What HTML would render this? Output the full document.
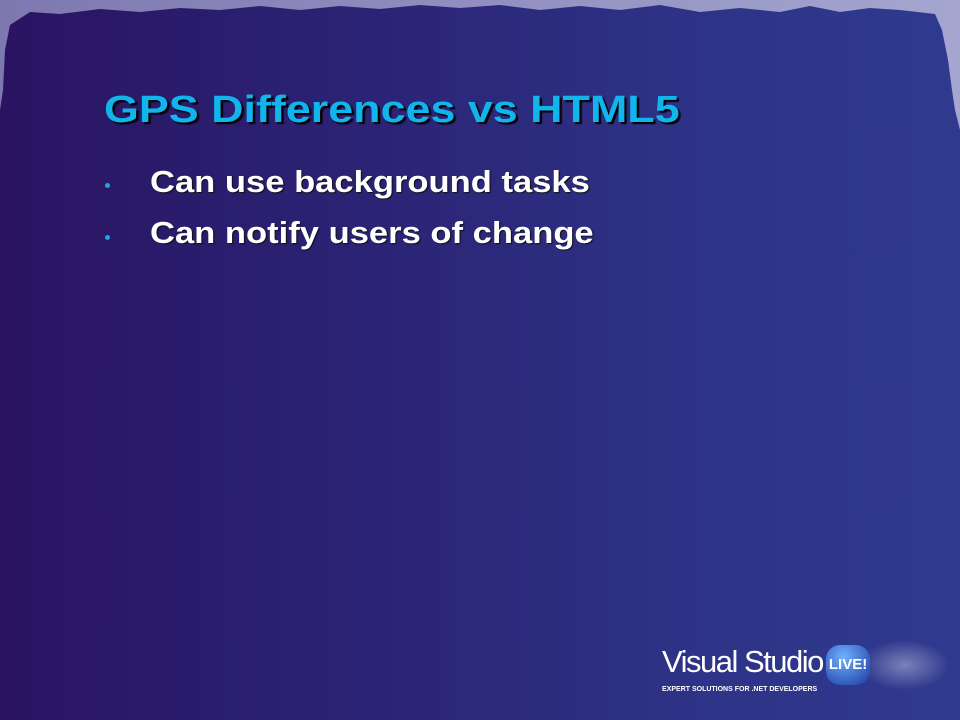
<!DOCTYPE html>
<html><head><style>
body{margin:0;width:960px;height:720px;overflow:hidden;position:relative;font-family:"Liberation Sans",sans-serif;
background:linear-gradient(90deg,#2a1462 0%,#2b2476 40%,#2e3488 75%,#2f3a8e 100%);}
.t{position:absolute;left:104px;top:89px;font-size:38px;font-weight:bold;color:#12b4ec;text-shadow:2px 2px 1px #000;white-space:nowrap;transform:scaleX(1.18);transform-origin:0 0}
.b{position:absolute;left:150px;font-size:31px;font-weight:bold;color:#fff;white-space:nowrap;text-shadow:1px 1px 1px #111;transform:scaleX(1.115);transform-origin:0 0}
.d{position:absolute;left:105px;width:5px;height:5px;border-radius:50%;background:#1aa8e0}
.logo{position:absolute;left:662px;top:645px;color:#fff}
</style></head><body>
<svg width="960" height="140" style="position:absolute;left:0;top:0">
<defs><linearGradient id="g" x1="0" y1="0" x2="1" y2="0"><stop offset="0" stop-color="#7e78b0"/><stop offset="1" stop-color="#a4a6d0"/></linearGradient></defs>
<path fill="url(#g)" d="M0 0H960V130L955 110 952 90 948 60 942 30 935 14 900 10 870 8 840 12 810 6 780 12 740 8 700 12 660 5 620 10 580 6 540 10 500 5 460 8 420 5 380 9 340 6 300 10 260 6 220 10 180 8 140 12 100 9 60 14 30 12 10 25 5 50 3 90 0 110Z"/>
</svg>
<div class="t">GPS Differences vs HTML5</div>
<div class="d" style="top:183px"></div>
<div class="b" style="top:164px">Can use background tasks</div>
<div class="d" style="top:235px"></div>
<div class="b" style="top:215px">Can notify users of change</div>
<div style="position:absolute;left:860px;top:640px;width:90px;height:50px;border-radius:50%;background:radial-gradient(closest-side,rgba(200,200,230,.5),rgba(200,200,230,0))"></div>
<div class="logo">
<div style="font-size:31px;letter-spacing:-1.5px;line-height:32px">Visual Studio<span style="display:inline-block;margin-left:3px;font-size:15px;font-weight:bold;letter-spacing:0;background:radial-gradient(circle at 40% 30%,#6fb0ff,#1a3aa0);border-radius:14px;padding:4px 3px;vertical-align:3px">LIVE!</span></div>
<div style="font-size:7px;font-weight:bold;margin-top:1px">EXPERT SOLUTIONS FOR .NET DEVELOPERS</div>
</div>
</body></html>
